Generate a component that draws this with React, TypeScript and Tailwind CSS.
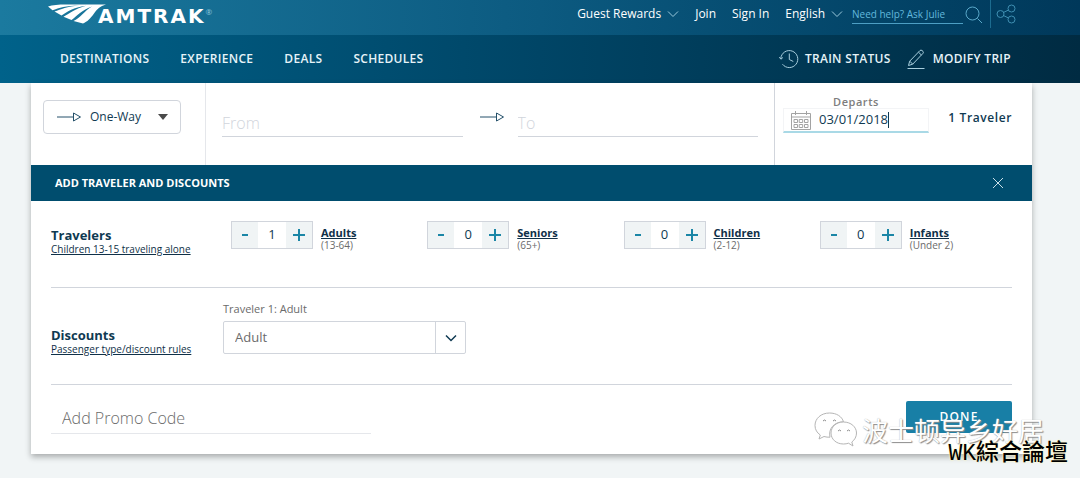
import { useState } from "react";
import clsx from "clsx";

type CounterItem = {
    id: string;
    label: string;
    ages: string;
};

const MENU = ["Destinations", "Experience", "Deals", "Schedules"];

const COUNTERS: CounterItem[] = [
    { id: "adults", label: "Adults", ages: "(13-64)" },
    { id: "seniors", label: "Seniors", ages: "(65+)" },
    { id: "children", label: "Children", ages: "(2-12)" },
    { id: "infants", label: "Infants", ages: "(Under 2)" },
];

const Chevron = ({ className }: { className?: string }) => (
    <svg viewBox="0 0 12 8" fill="none" stroke="currentColor" className={clsx("w-3 h-2 shrink-0", className)}>
        <path d="M1 1.5 6 6.5 11 1.5" />
    </svg>
);

const Arrow = () => (
    <svg viewBox="0 0 26 12" fill="none" stroke="currentColor" className="w-[26px] h-3 shrink-0 text-[#24506a]">
        <path d="M1 6H17M17.5 2 24.5 6 17.5 10Z" />
    </svg>
);

const Logo = () => (
    <a href="#home" aria-label="Amtrak" className="flex items-center text-white">
        <svg viewBox="0 0 58 20" fill="currentColor" className="w-[58px] h-5 shrink-0">
            <path d="M0 2.500C5 .8 12 .4 20 .5H58C52 2 49 5.500 46 9.500C42 15 39.500 17.500 35 19.500L25.500 17C32 14.500 36 7 44 2.500C33 6.500 29 12 23.500 16L15.500 12.700C21 10 27 4.500 38 1.800C25 3.500 20 7.500 13.500 11.500L6.500 7.500C13 5 19 2.600 31 1.400C18 1.600 11 3.800 4.500 6.300Z" />
        </svg>
        <span className="-ml-2 pt-1 font-['DejaVu_Sans'] font-bold text-xl leading-5 tracking-widest">AMTRAK</span>
        <span className="pt-1 text-[8px] leading-3 self-start text-[#8cc8de]">®</span>
    </a>
);

const Header = () => (
    <header>
        <div className="h-[35px] pl-12 pr-16 flex items-start justify-between bg-linear-to-r from-[#1b7a9f] via-[#0c5a80] to-[#00385a]">
            <div className="h-7 flex items-center">
                <Logo />
            </div>
            <nav aria-label="Account" className="h-7 flex items-center text-xs text-white">
                <button className="flex items-center gap-[6px]">
                    Guest Rewards <Chevron className="text-[#9cc9dc]" />
                </button>
                <a href="#join" className="ml-4">Join</a>
                <a href="#sign-in" className="ml-4">Sign In</a>
                <button className="ml-4 flex items-center gap-[6px]">
                    English <Chevron className="text-[#9cc9dc]" />
                </button>
                <input
                    aria-label="Need help? Ask Julie"
                    placeholder="Need help? Ask Julie"
                    className="ml-[9px] w-[111px] h-5 text-[10px] border-b border-[#4d9fc4] outline-none placeholder:text-[#62b8dc]"
                />
                <button aria-label="Search" className="ml-[2px] mt-[2px]">
                    <svg viewBox="0 0 18 18" fill="none" stroke="#5aa9ca" className="w-[18px] h-[18px]">
                        <circle cx="7.500" cy="7.500" r="6.500" />
                        <path d="m12.500 12.500 4.500 4.500" />
                    </svg>
                </button>
                <button aria-label="Share" className="ml-[7px] pl-[5px] h-7 border-l border-[#1c6c90]">
                    <svg viewBox="0 0 20 20" fill="none" stroke="#3f8fb2" className="w-5 h-5">
                        <circle cx="4.500" cy="10" r="3.500" />
                        <circle cx="15.500" cy="4.500" r="3.500" />
                        <circle cx="15.500" cy="15.500" r="3.500" />
                        <path d="m7.700 8.400 4.600-2.300M7.700 11.600l4.600 2.300" />
                    </svg>
                </button>
            </nav>
        </div>

        <div className="h-12 pl-[60px] pr-[69px] flex items-center justify-between text-xs font-semibold tracking-wide uppercase text-[#e6f3f8] bg-linear-to-r from-[#00628a] via-[#004566] to-[#002b42]">
            <nav aria-label="Main" className="flex gap-[31px]">
                {MENU.map((item) => (
                    <a key={item} href={`#${item.toLowerCase()}`}>{item}</a>
                ))}
            </nav>
            <div className="flex gap-4">
                <a href="#status" className="flex items-center gap-[6px]">
                    <svg viewBox="0 0 20 20" fill="none" stroke="#a9cfde" className="w-5 h-5">
                        <path d="M1.800 9.500A8.500 8.500 0 1 1 3.500 15.200M.3 8.200l1.600 2 2-1.700M10.300 4.500v6l4 2" />
                    </svg>
                    Train Status
                </a>
                <a href="#modify" className="flex items-center gap-2">
                    <svg viewBox="0 0 18 20" fill="none" stroke="#a9cfde" className="w-[18px] h-5">
                        <path d="M.5 19.500h17M1.500 16.500l1.200-4.300L13 1.500q1-.8 2 0l1 .9q.8.9 0 1.900L5.700 15.200ZM11.500 3.200l2.900 2.800M2.800 12.200l2.900 3" />
                    </svg>
                    Modify Trip
                </a>
            </div>
        </div>
    </header>
);

const SearchBar = ({ travelers }: { travelers: number }) => {
    const [date, setDate] = useState("03/01/2018");

    return (
        <div className="h-[82px] flex text-[#0f3a52]">
            <div className="w-[175px] pl-3 pt-[17px] border-r border-gray-200">
                <label className="w-[138px] h-[34px] px-3 flex items-center justify-between rounded border border-gray-300">
                    <Arrow />
                    <select aria-label="Trip type" className="appearance-none w-[60px] text-xs font-medium outline-none">
                        <option>One-Way</option>
                        <option>Round-Trip</option>
                    </select>
                    <svg viewBox="0 0 10 6" className="w-[10px] h-[6px] fill-[#4a4a4a]">
                        <path d="M0 0h10L5 6Z" />
                    </svg>
                </label>
            </div>

            <div className="flex-1 px-4 pt-[26px] flex items-start">
                <input
                    aria-label="From"
                    placeholder="From"
                    className="flex-1 min-w-0 h-7 text-base font-light border-b border-gray-300 outline-none placeholder:text-gray-300"
                />
                <div className="w-[55px] pl-4 pt-[2px]">
                    <Arrow />
                </div>
                <input
                    aria-label="To"
                    placeholder="To"
                    className="flex-1 min-w-0 h-7 text-base font-light border-b border-gray-300 outline-none placeholder:text-gray-300"
                />
            </div>

            <div className="w-[258px] pl-2 pr-5 pt-3 flex justify-between border-l border-gray-300">
                <div className="w-[146px]">
                    <label htmlFor="departs" className="block text-center text-[11px] leading-[13px] font-semibold tracking-wider text-[#7d7d7d]">
                        Departs
                    </label>
                    <div className="h-[25px] pl-[7px] flex items-center border border-gray-100 border-b-2 border-b-[#a9d9e6]">
                        <svg viewBox="0 0 20 19" fill="none" stroke="#a3a3a3" className="w-5 h-[19px] mr-2">
                            <path d="M.5 2.500h19v16H.5ZM.5 6h19M4.500 0v4M15.500 0v4" />
                            <path d="M3 8.500h3.500v3H3ZM8.200 8.500h3.500v3H8.200ZM13.500 8.500H17v3h-3.500ZM3 13.500h3.500v3H3ZM8.200 13.500h3.500v3H8.200ZM13.500 13.500H17v3h-3.500Z" />
                        </svg>
                        <input
                            id="departs"
                            value={date}
                            onChange={(e) => setDate(e.target.value)}
                            className="w-[69px] text-[13px] outline-none caret-transparent"
                        />
                        <span className="w-px h-4 bg-[#0f3a52]" />
                    </div>
                </div>
                <button className="h-[46px] text-xs font-semibold tracking-wider">
                    {travelers} Traveler{travelers > 1 && "s"}
                </button>
            </div>
        </div>
    );
};

type CounterProps = {
    item: CounterItem;
    value: number;
    onChange: (value: number) => void;
};

const Counter = ({ item, value, onChange }: CounterProps) => (
    <div className="flex items-start gap-2">
        <div className="w-[82px] h-7 flex items-stretch border border-gray-300 text-[#0f3a52]">
            <button
                aria-label={`Remove ${item.label}`}
                onClick={() => onChange(Math.max(0, value - 1))}
                className="w-[26px] flex items-center justify-center bg-[#f0f4f5]"
            >
                <svg viewBox="0 0 12 12" stroke="#1b86a6" strokeWidth="2" className="w-3 h-3">
                    <path d="M3 6h6" />
                </svg>
            </button>
            <input
                id={item.id}
                value={value}
                readOnly
                className="flex-1 min-w-0 text-center text-[13px] outline-none"
            />
            <button
                aria-label={`Add ${item.label}`}
                onClick={() => onChange(value + 1)}
                className="w-[26px] flex items-center justify-center bg-[#f0f4f5]"
            >
                <svg viewBox="0 0 12 12" stroke="#1b86a6" strokeWidth="2" className="w-3 h-3">
                    <path d="M0 6h12M6 0v12" />
                </svg>
            </button>
        </div>
        <label htmlFor={item.id} className="pt-[6px]">
            <span className="block text-[11px] leading-3 font-bold underline text-[#0f3048]">{item.label}</span>
            <span className="block text-[10px] leading-3 font-medium text-[#6b6b6b]">{item.ages}</span>
        </label>
    </div>
);

const SectionTitle = ({ title, link }: { title: string; link: string }) => (
    <div className="w-[172px] shrink-0">
        <h3 className="text-[13px] leading-4 font-bold text-[#0f3a52]">{title}</h3>
        <a href="#rules" className="block text-[10px] leading-3 underline text-[#0f3048]">{link}</a>
    </div>
);

const Watermark = () => (
    <div aria-hidden="true" className="pointer-events-none">
        <div className="absolute right-9 bottom-[30px] flex items-center gap-1">
            <svg viewBox="0 0 44 36" fill="#ffffff" stroke="#b5b5b5" className="w-11 h-9">
                <path d="M15.500 1C7 1 1 6.500 1 13.500c0 4 2 7.300 5.300 9.500L5 27l5-2.500c2 .6 4 .8 6 .7C14 17 20 9.800 29.500 9.800 28 4.500 22.500 1 15.500 1Z" />
                <path d="M29.500 10C22 10 17 15 17 21s5 11 12.500 11c1.800 0 3.500-.3 5-.8L39 34l-1.200-4c2.800-2 4.700-5.200 4.700-9C42.500 15 37 10 29.500 10Z" />
                <path fill="none" stroke="#8c8c8c" d="M9 9q1.500-2 3 0M19 9q1.500-2 3 0M24 19q1.500-2 3 0M33 19q1.500-2 3 0" />
            </svg>
            <span className="font-['Noto_Sans_CJK_SC',sans-serif] text-[26px] leading-8 text-white [text-shadow:1px_1px_1px_#8c8c8c,0_0_1px_#a8a8a8]">
                波士顿异乡好居
            </span>
        </div>
        <span className="absolute right-3 bottom-2 font-['Liberation_Mono','Noto_Sans_CJK_TC',monospace] font-medium text-[23px] leading-8 text-black [text-shadow:0_0_2px_#fff7c4,0_0_2px_#fff7c4]">
            WK綜合論壇
        </span>
    </div>
);

export default function App() {
    const [counts, setCounts] = useState<Record<string, number>>({ adults: 1, seniors: 0, children: 0, infants: 0 });
    const [isOpen, setIsOpen] = useState(true);

    const total = Object.values(counts).reduce((sum, n) => sum + n, 0);

    return (
        <div className="relative min-h-screen bg-[#f1f5f6] font-['Open_Sans',sans-serif]">
            <Header />

            <main className="ml-[31px] mr-12 bg-white shadow-[0_3px_6px_rgba(0,0,0,0.3)]">
                <SearchBar travelers={total} />

                {isOpen && (
                    <section>
                        <div className="h-9 pl-6 pr-7 flex items-center justify-between bg-[#004d6e] text-white">
                            <h2 className="text-[11px] font-bold uppercase">Add Traveler and Discounts</h2>
                            <button aria-label="Close" onClick={() => setIsOpen(false)}>
                                <svg viewBox="0 0 12 12" stroke="#c9dfe8" className="w-3 h-3">
                                    <path d="M1 1l10 10M11 1 1 11" />
                                </svg>
                            </button>
                        </div>

                        <div className="px-5">
                            <div className="h-[87px] pt-5 flex border-b border-gray-300">
                                <div className="w-[180px] pt-[6px]">
                                    <SectionTitle title="Travelers" link="Children 13-15 traveling alone" />
                                </div>
                                <div className="flex-1 grid grid-cols-4 gap-1">
                                    {COUNTERS.map((item) => (
                                        <Counter
                                            key={item.id}
                                            item={item}
                                            value={counts[item.id]}
                                            onChange={(value) => setCounts({ ...counts, [item.id]: value })}
                                        />
                                    ))}
                                </div>
                            </div>

                            <div className="h-[97px] pt-3 flex border-b border-gray-300">
                                <div className="pt-[27px]">
                                    <SectionTitle title="Discounts" link="Passenger type/discount rules" />
                                </div>
                                <div className="w-[243px] text-[#6b6b6b]">
                                    <label htmlFor="discount" className="block text-[11px] leading-[18px]">
                                        Traveler 1: Adult
                                    </label>
                                    <div className="mt-[3px] h-[33px] flex items-stretch rounded-xs border border-gray-300">
                                        <select id="discount" className="appearance-none flex-1 pl-[11px] text-[13px] outline-none">
                                            <option>Adult</option>
                                            <option>Military</option>
                                        </select>
                                        <span className="w-[30px] flex items-center justify-center border-l border-gray-300 text-[#0f3a52]">
                                            <Chevron className="stroke-[1.5]" />
                                        </span>
                                    </div>
                                </div>
                            </div>

                            <div className="h-[69px] pt-4 flex items-start justify-between">
                                <input
                                    aria-label="Add Promo Code"
                                    placeholder="Add Promo Code"
                                    className="w-80 h-[33px] pt-[2px] pl-[11px] text-base font-light border-b border-gray-200 outline-none placeholder:text-[#6b6b6b]"
                                />
                                <button className="w-[106px] h-8 rounded-xs bg-[#187fa6] text-xs font-semibold tracking-widest text-white">
                                    DONE
                                </button>
                            </div>
                        </div>
                    </section>
                )}
            </main>

            <Watermark />
        </div>
    );
}
